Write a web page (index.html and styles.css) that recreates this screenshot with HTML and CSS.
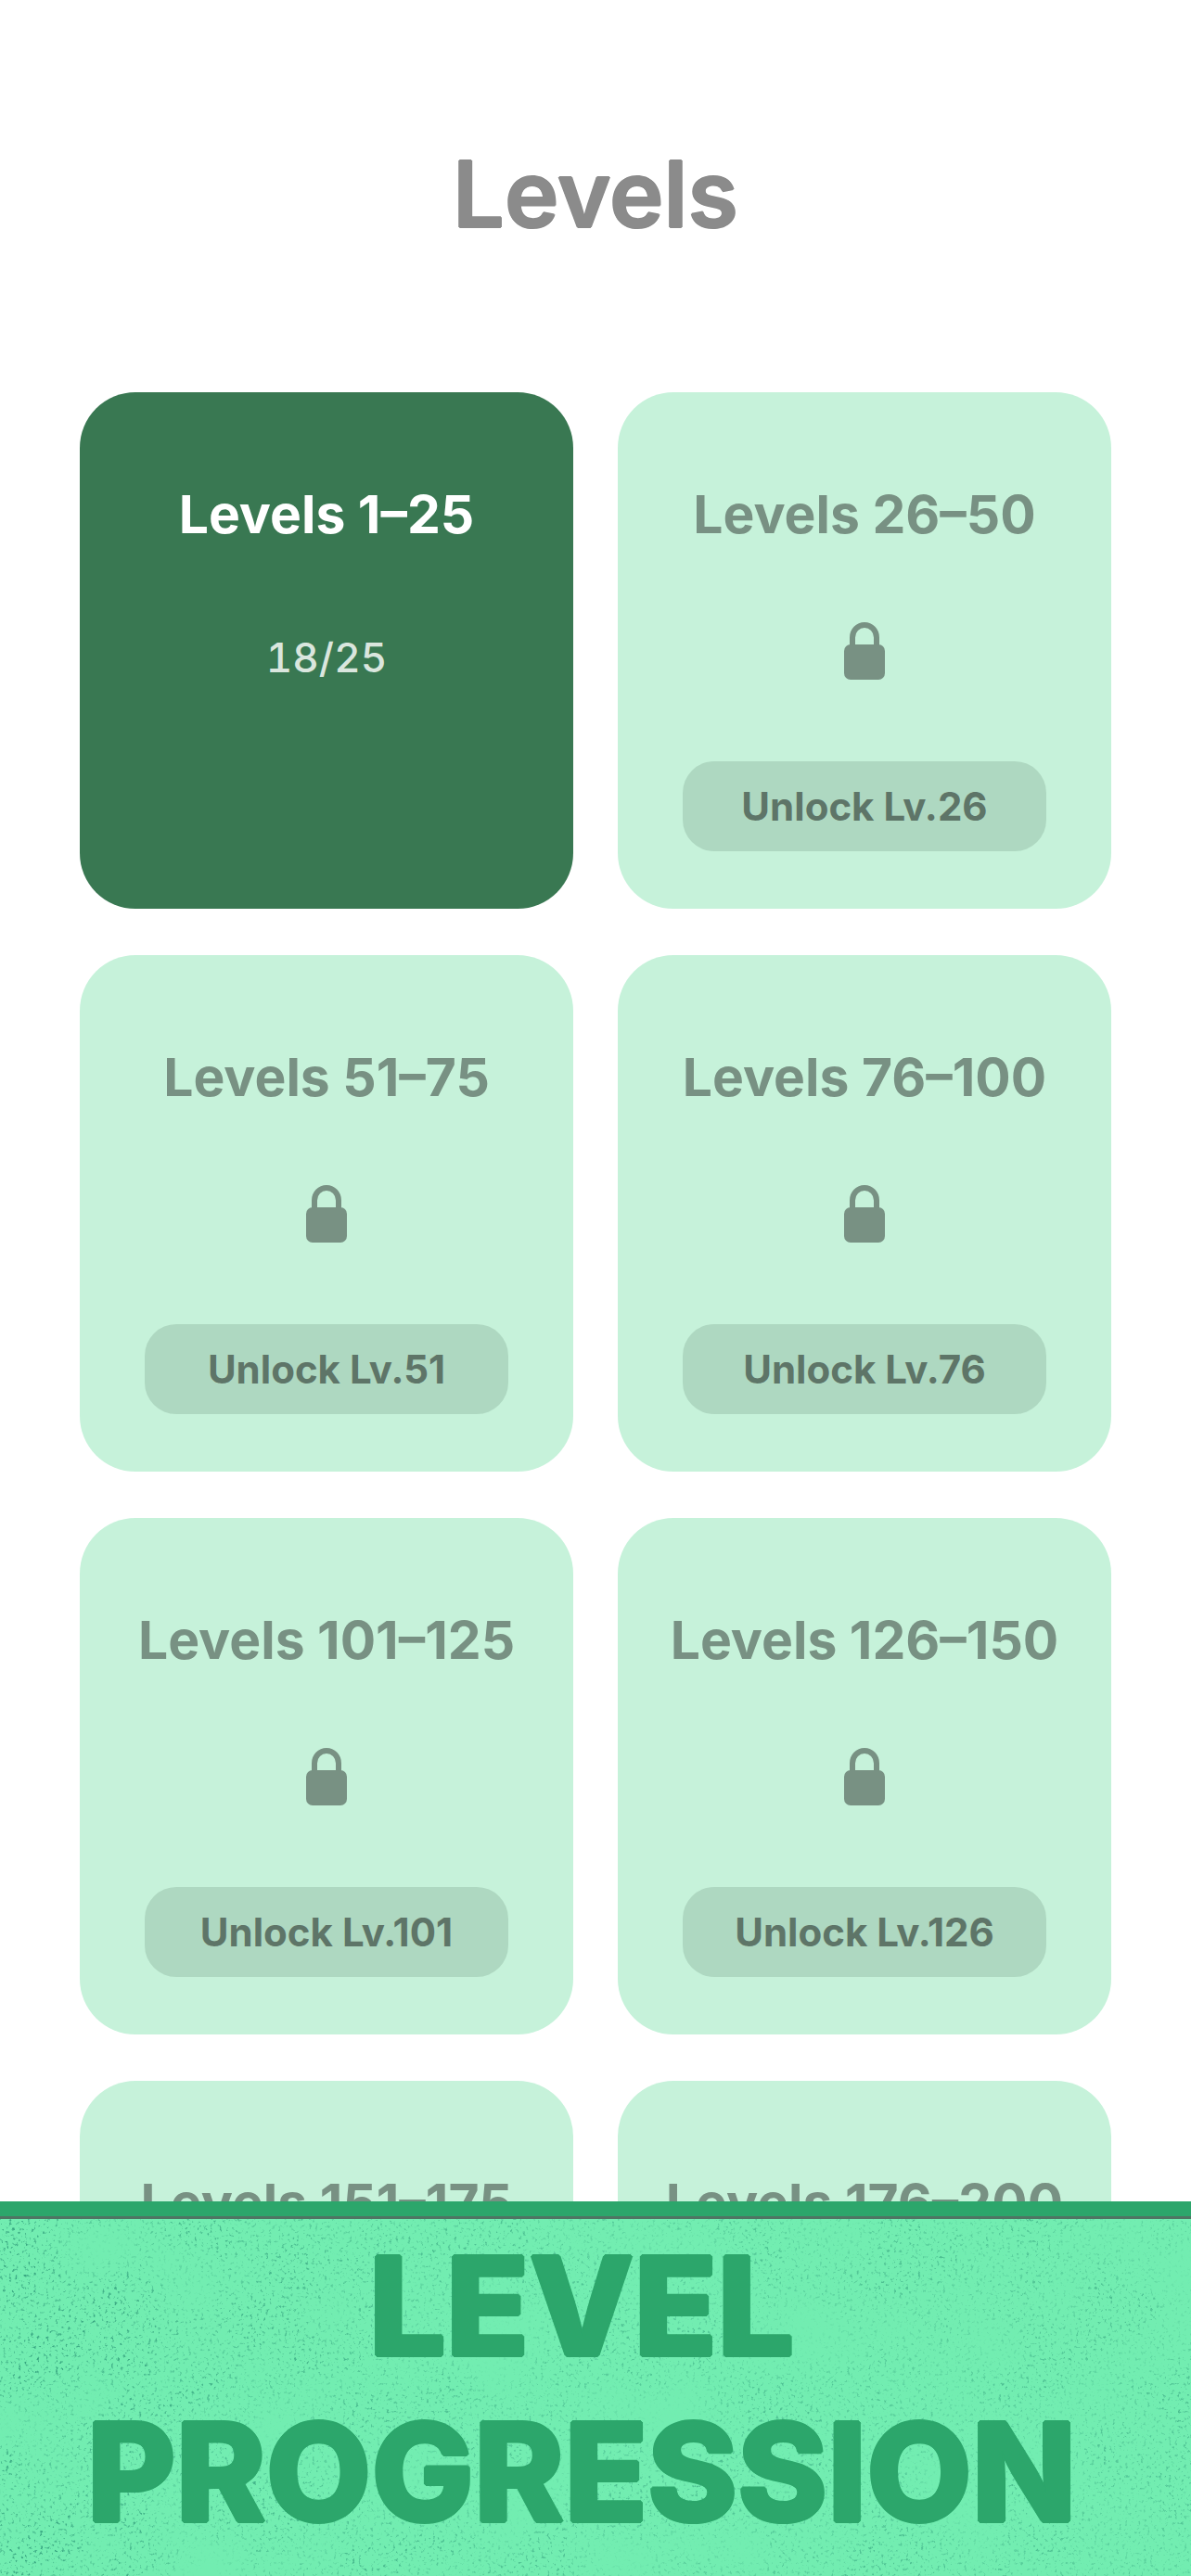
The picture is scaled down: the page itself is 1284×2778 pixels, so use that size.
FILE: index.html
```html
<!DOCTYPE html>
<html lang="en">
<head>
<meta charset="utf-8">
<meta name="viewport" content="width=device-width, initial-scale=1">
<title>Levels</title>
<link rel="stylesheet" href="styles.css">
</head>
<body>
<svg class="defs" aria-hidden="true">
  <symbol id="lock" viewBox="0 0 44 62">
    <path d="M9 27V16.500a13 13.500 0 0 1 26 0V27" fill="none" stroke="currentColor" stroke-width="6"/>
    <rect y="24" width="44" height="38" rx="7" fill="currentColor"/>
  </symbol>
</svg>
<main class="screen">
  <h1 class="title">Levels</h1>
  <div class="grid">
    <button class="card card-open" type="button"><span class="name">Levels 1–25</span><span class="progress">18/25</span></button>
    <button class="card" type="button"><span class="name">Levels 26–50</span><svg class="lock" aria-hidden="true"><use href="#lock"/></svg><span class="pill">Unlock Lv.26</span></button>
    <button class="card" type="button"><span class="name">Levels 51–75</span><svg class="lock" aria-hidden="true"><use href="#lock"/></svg><span class="pill">Unlock Lv.51</span></button>
    <button class="card" type="button"><span class="name">Levels 76–100</span><svg class="lock" aria-hidden="true"><use href="#lock"/></svg><span class="pill">Unlock Lv.76</span></button>
    <button class="card" type="button"><span class="name">Levels 101–125</span><svg class="lock" aria-hidden="true"><use href="#lock"/></svg><span class="pill">Unlock Lv.101</span></button>
    <button class="card" type="button"><span class="name">Levels 126–150</span><svg class="lock" aria-hidden="true"><use href="#lock"/></svg><span class="pill">Unlock Lv.126</span></button>
    <button class="card" type="button"><span class="name">Levels 151–175</span></button>
    <button class="card" type="button"><span class="name">Levels 176–200</span></button>
  </div>
</main>
<footer class="banner">
  <svg class="grain" aria-hidden="true">
    <filter id="specks" x="0" y="0" width="100%" height="100%" color-interpolation-filters="sRGB">
      <feTurbulence type="fractalNoise" baseFrequency="0.3" numOctaves="3" seed="4" result="fine"/>
      <feColorMatrix in="fine" values="0 0 0 0 0.18  0 0 0 0 0.6  0 0 0 0 0.47  5 0 0 0 -2.95" result="dots"/>
      <feTurbulence type="fractalNoise" baseFrequency="0.012" numOctaves="4" seed="11" result="coarse"/>
      <feColorMatrix in="coarse" values="0 0 0 0 0  0 0 0 0 0  0 0 0 0 0  2 0 0 0 -0.3" result="patch"/>
      <feComposite in="dots" in2="patch" operator="in"/>
    </filter>
    <linearGradient id="fade">
      <stop offset="0" stop-color="#ddd"/>
      <stop offset="0.35" stop-color="#888"/>
      <stop offset="1" stop-color="#888"/>
    </linearGradient>
    <mask id="wear"><rect width="100%" height="100%" fill="url(#fade)"/></mask>
    <g mask="url(#wear)"><rect width="100%" height="100%" filter="url(#specks)"/></g>
  </svg>
  <h2 class="slogan">LEVEL PROGRESSION</h2>
</footer>
</body>
</html>
```

FILE: styles.css
```css
* {
  box-sizing: border-box;
}

body {
  margin: 0;
  height: 100vh;
  display: flex;
  flex-direction: column;
  overflow: hidden;
  background: #fff;
  font-family: Inter, "Liberation Sans", sans-serif;
}

.defs {
  display: none;
}

.screen {
  flex: 1;
  min-height: 0;
  overflow: hidden;
  padding: 0 86px;
}

.title {
  margin: 0;
  padding: 149px 0 154px;
  font-size: 99px;
  line-height: 120px;
  font-weight: 600;
  text-align: center;
  color: #8b8b8b;
  text-shadow: 1px 0, -1px 0, 0 1px, 0 -1px;
}

.grid {
  display: grid;
  grid-template-columns: 1fr 1fr;
  gap: 50px 48px;
}

.card {
  display: flex;
  flex-direction: column;
  align-items: center;
  justify-content: flex-start;
  min-height: 557px;
  padding: 98px 20px 62px;
  border: 0;
  border-radius: 60px;
  background: #c6f2da;
  color: #789183;
  font-family: inherit;
}

.card-open {
  background: #397852;
  color: #fff;
}

.name {
  font-size: 57px;
  line-height: 68px;
  font-weight: 700;
  white-space: nowrap;
}

.progress {
  margin-top: 93px;
  font-size: 44px;
  line-height: 54px;
  font-weight: 500;
  font-variant-numeric: tabular-nums;
  color: #dae6de;
}

.lock {
  width: 44px;
  height: 62px;
  margin: 82px 0 88px;
}

.pill {
  width: 392px;
  max-width: 100%;
  border-radius: 34px;
  background: #aed8c1;
  color: #5e7568;
  font-size: 42px;
  line-height: 97px;
  font-weight: 700;
}

.banner {
  position: relative;
  border-top: 16px solid #2ca66b;
  background: #72edb1;
}

.grain {
  position: absolute;
  inset: 0;
  width: 100%;
  height: 100%;
  border-top: 3px solid #4f7563;
}

.slogan {
  position: relative;
  margin: 0;
  padding: 7px 30px 23px 0;
  font-size: 147px;
  line-height: 179px;
  font-weight: 800;
  text-align: center;
  color: #2ca66b;
  text-shadow: 2px 0, -2px 0, 0 2px, 0 -2px, 1px 1px, -1px 1px, 1px -1px, -1px -1px;
}
```
